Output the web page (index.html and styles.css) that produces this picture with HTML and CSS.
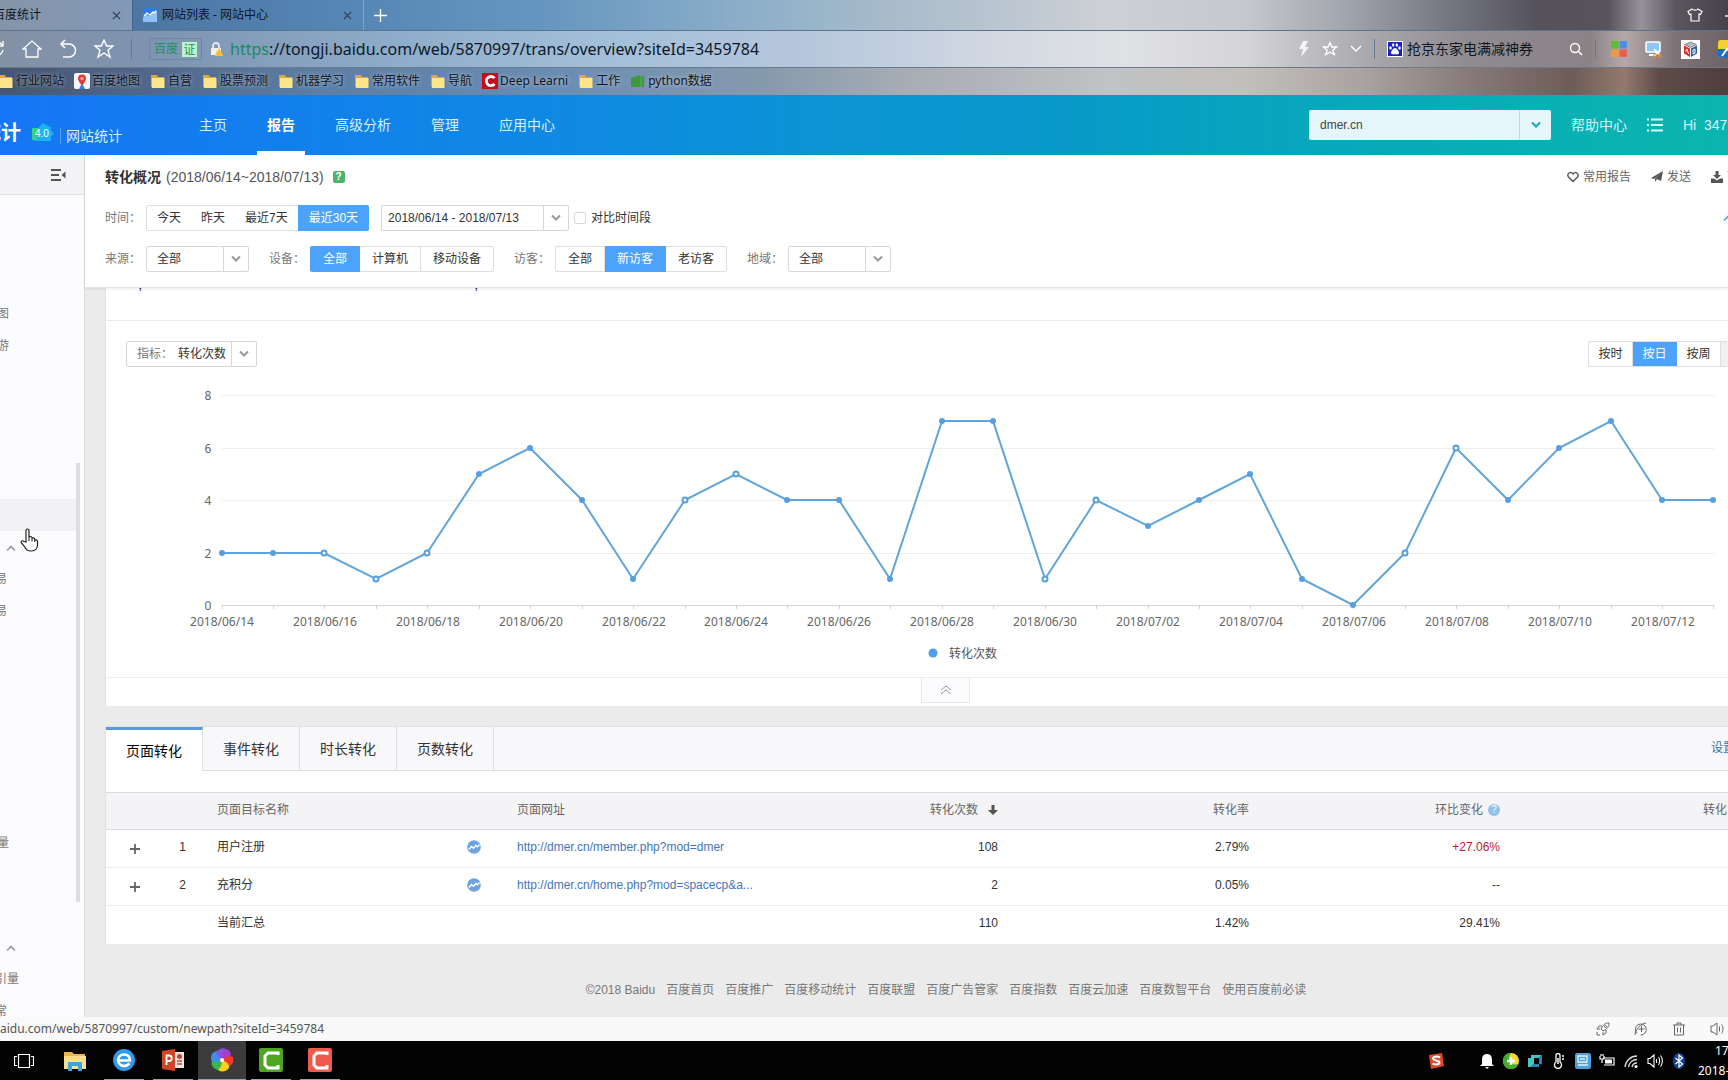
FILE: index.html
```html
<!DOCTYPE html>
<html lang="zh-CN">
<head>
<meta charset="utf-8">
<title>转化概况 - 百度统计</title>
<link rel="stylesheet" href="styles.css">
</head>
<body>
<svg class="defs" aria-hidden="true">
  <defs>
    <symbol id="folder" viewBox="0 0 16 16"><path d="M1 2h6l1 2h6v10H1z" fill="#d9a93a"/><path d="M2 5h12.500v10H2z" fill="#ffe58a"/></symbol>
    <symbol id="caret" viewBox="0 0 10 8"><path d="M1 1.500l4 4 4-4" fill="none" stroke="currentColor" stroke-width="2"/></symbol>
    <symbol id="close" viewBox="0 0 10 10"><path d="M1 1l8 8M9 1L1 9" fill="none" stroke="currentColor" stroke-width="1.200"/></symbol>
    <symbol id="trend" viewBox="0 0 14 14"><circle cx="7" cy="7" r="6.800" fill="#6fa3dd"/><path d="M2 9.500l2.500-3 2 1.800L9 5.500l1.500 1.300L12.500 4.500" fill="none" stroke="#fff" stroke-width="1.300"/></symbol>
  </defs>
</svg>
<div class="page">
  <div class="browser">
    <div class="tabstrip">
      <div class="btab btab-on"><span class="btab-name">百度统计</span><svg class="x" width="9" height="9"><use href="#close"/></svg></div>
      <div class="btab btab-off"><svg width="14" height="14" viewBox="0 0 14 14"><rect width="14" height="14" rx="1" fill="#2f7be0"/><path d="M0 9l3-3 3 2 4-4 1 1 3-3v12H0z" fill="#8fc0f7"/><path d="M1 8l3-3 3 2 3-3 1 1 2-2" fill="none" stroke="#fff" stroke-width="1.300"/></svg><span>网站列表 - 网站中心</span><svg class="x" width="9" height="9"><use href="#close"/></svg></div>
      <button class="plain newtab" aria-label="新标签页"><svg width="13" height="13" viewBox="0 0 13 13"><path d="M6.500 0v13M0 6.500h13" stroke="#fff" stroke-width="1.400"/></svg></button>
      <svg class="skin" width="16" height="14" viewBox="0 0 16 14"><path d="M5 1L1 3.500l1.500 3L4 6v7h8V6l1.500.5 1.500-3L11 1c-1 1.500-5 1.500-6 0z" fill="none" stroke="#fff" stroke-width="1.200"/></svg>
      <svg width="12" height="14" viewBox="0 0 12 14"><path d="M0 8h12" stroke="#fff" stroke-width="1.400"/></svg>
    </div>
    <div class="toolbar">
      <div class="tools">
        <button class="plain" aria-label="刷新"><svg width="18" height="18" viewBox="0 0 18 18"><path d="M15 5A7 7 0 1 0 16 10M16 1v5h-5" fill="none" stroke="#fff" stroke-width="1.400"/></svg></button>
        <button class="plain" aria-label="主页"><svg width="20" height="20" viewBox="0 0 20 20"><path d="M1 10l9-8 9 8h-3v8H4v-8z" fill="none" stroke="#fff" stroke-width="1.300"/></svg></button>
        <button class="plain" aria-label="恢复"><svg width="18" height="20" viewBox="0 0 18 20"><path d="M6 1L2 5l4 4M2 5h8a6 6 0 0 1 0 13H4" fill="none" stroke="#fff" stroke-width="1.500"/></svg></button>
        <button class="plain" aria-label="收藏"><svg width="20" height="20" viewBox="0 0 20 20"><path d="M10 1l2.600 6H19l-5 4.300 2 6.700-6-4-6 4 2-6.700L1 7h6.400z" fill="none" stroke="#fff" stroke-width="1.400"/></svg></button>
      </div>
      <span class="vline"></span>
      <span class="cert">百度<b>证</b></span>
      <svg class="lock" width="14" height="14" viewBox="0 0 14 14"><path d="M3 7V4a3 3 0 0 1 6 0v3" fill="none" stroke="#e8e8e8" stroke-width="1.800"/><rect x="1" y="6" width="10" height="7" fill="#f3f0ec"/><path d="M9 6l4.500 8h-9z" fill="#f2c230"/></svg>
      <span class="scheme">https</span><input class="url" aria-label="地址" value="://tongji.baidu.com/web/5870997/trans/overview?siteId=3459784">
      <div class="addr-right">
        <svg width="12" height="16" viewBox="0 0 12 16"><path d="M5 0h5L7 6h4L3 16l2-8H1z" fill="#f4f4f6"/></svg>
        <svg width="16" height="16" viewBox="0 0 20 20"><path d="M10 2l2.500 5.500H18l-4.500 4L15.500 17 10 14l-5.500 3 2-5.500L2 7.500h5.500z" fill="none" stroke="#fff" stroke-width="1.600"/></svg>
        <svg width="12" height="8" viewBox="0 0 12 8"><path d="M1 1l5 5 5-5" fill="none" stroke="#fff" stroke-width="1.400"/></svg>
        <span class="vline"></span>
        <svg width="16" height="16" viewBox="0 0 16 16"><rect width="16" height="16" fill="#fff"/><rect x="1" y="1" width="14" height="14" fill="#1a1fc8"/><g fill="#fff"><ellipse cx="3.500" cy="7" rx="1.300" ry="1.700"/><ellipse cx="6.200" cy="4" rx="1.200" ry="1.700"/><ellipse cx="9.800" cy="4" rx="1.200" ry="1.700"/><ellipse cx="12.500" cy="7" rx="1.300" ry="1.700"/><path d="M8 7c2 0 4 3.500 4 5s-2 1.500-4 1.300S4 13.500 4 12s2-5 4-5z"/></g></svg>
        <input class="find" aria-label="搜索" value="抢京东家电满减神券">
        <svg width="14" height="14" viewBox="0 0 14 14"><circle cx="6" cy="6" r="4.500" fill="none" stroke="#fff" stroke-width="1.400"/><path d="M9.500 9.500L13 13" stroke="#fff" stroke-width="1.600"/></svg>
        <span class="vline"></span>
        <svg class="app" width="16" height="16" viewBox="0 0 16 16"><rect width="7.500" height="7.500" rx="1" fill="#5bbf2f"/><rect x="8.500" width="7.500" height="7.500" rx="1" fill="#4f8fe8"/><rect y="8.500" width="7.500" height="7.500" rx="1" fill="#f39a3e"/><rect x="8.500" y="8.500" width="7.500" height="7.500" rx="1" fill="#e8604c"/></svg>
        <svg class="app" width="18" height="18" viewBox="0 0 18 18"><rect x="1" y="2" width="14" height="10" rx="1" fill="#8cc6f5" stroke="#fff" stroke-width="1.500"/><path d="M4 15h7" stroke="#fff" stroke-width="2"/><path d="M9 9l6 6M15 10l-5 5" stroke="#fff" stroke-width="1.500"/><circle cx="10" cy="16" r="1.500" fill="none" stroke="#e88a2a"/><circle cx="15" cy="16" r="1.500" fill="none" stroke="#e88a2a"/></svg>
        <svg class="app" width="19" height="19" viewBox="0 0 19 19"><rect width="19" height="19" fill="#fff"/><path d="M9.500 2l6 2.500-6 3-6-3z" fill="#b9bcc4" stroke="#555" stroke-width=".6"/><path d="M3 5.500l6 3V17l-6-3.500z" fill="#d9302c"/><path d="M16 5.500l-6 3V17l6-3.500z" fill="#2b5cb0"/><path d="M4.500 12L6 9l1.500 5M12 10l2-1v4l-2 1z" fill="none" stroke="#fff"/></svg>
        <svg class="app" width="18" height="18" viewBox="0 0 18 18"><rect width="18" height="18" rx="3" fill="#f7cf2f"/><path d="M0 9h18v6a3 3 0 0 1-3 3H3a3 3 0 0 1-3-3z" fill="#1d6fc4"/><path d="M4 16l5-7 4 3" stroke="#fff" stroke-width="2" fill="none"/></svg>
      </div>
    </div>
    <nav class="bookmarks">
      <a href="#"><svg width="16" height="16"><use href="#folder"/></svg>行业网站</a>
      <a href="#"><svg width="16" height="16" viewBox="0 0 16 16"><rect width="16" height="16" rx="2" fill="#f5f7fa"/><path d="M5 16l3-6 3 6z" fill="#3b7ce0"/><path d="M8 1.500a4 4 0 0 1 4 4c0 3-4 7-4 7s-4-4-4-7a4 4 0 0 1 4-4z" fill="#e23b35"/><circle cx="8" cy="5.500" r="1.700" fill="#f5a09c"/></svg>百度地图</a>
      <a href="#"><svg width="16" height="16"><use href="#folder"/></svg>自营</a>
      <a href="#"><svg width="16" height="16"><use href="#folder"/></svg>股票预测</a>
      <a href="#"><svg width="16" height="16"><use href="#folder"/></svg>机器学习</a>
      <a href="#"><svg width="16" height="16"><use href="#folder"/></svg>常用软件</a>
      <a href="#"><svg width="16" height="16"><use href="#folder"/></svg>导航</a>
      <a href="#"><svg width="16" height="16" viewBox="0 0 16 16"><rect width="16" height="16" fill="#c40d1e"/><path d="M12.500 5.200A4.600 4.600 0 1 0 12.500 11" fill="none" stroke="#fff" stroke-width="2.800"/></svg>Deep Learni</a>
      <a href="#"><svg width="16" height="16"><use href="#folder"/></svg>工作</a>
      <a href="#"><svg width="16" height="16" viewBox="0 0 16 16"><path d="M1 5l9-3 1 1h3v11H1z" fill="#3c9a3c"/><path d="M11 3v11" stroke="#58b058"/></svg>python数据</a>
    </nav>
  </div>

  <header class="header">
    <div class="brand"><span class="logo">百度统计</span><svg class="ver" width="22" height="20" viewBox="0 0 22 20"><path d="M0 5h6l5-5 9 5-2 1 4 5-3 2v5H3l-3-2z" fill="#19b3f0"/><path d="M0 5h7l-3 12H0z" fill="#35cf8a"/><text x="3" y="14">4.0</text></svg><span class="brand-sub">网站统计</span></div>
    <nav class="nav"><a href="#">主页</a><a href="#" class="on">报告</a><a href="#">高级分析</a><a href="#">管理</a><a href="#">应用中心</a></nav>
    <div class="header-right">
      <div class="site"><select aria-label="站点"><option>dmer.cn</option></select><span class="site-caret"><svg width="10" height="8"><use href="#caret"/></svg></span></div>
      <a href="#">帮助中心</a>
      <svg width="16" height="14" viewBox="0 0 16 14"><path d="M0 1.500h2M4 1.500h12M0 7h2M4 7h12M0 12.500h2M4 12.500h12" stroke="#d8fbfa" stroke-width="2"/></svg>
      <span class="user">Hi&nbsp; 347</span>
    </div>
  </header>

  <div class="body">
    <aside class="side">
      <div class="side-top"><button class="plain" aria-label="收起"><svg width="15" height="14" viewBox="0 0 15 14"><path d="M0 2h10M0 7h8M0 12h10" stroke="#555" stroke-width="1.800"/><path d="M14.500 3.500v7L10.500 7z" fill="#555"/></svg></button></div>
      <ul class="menu menu-a"><li>图</li><li>游</li></ul>
      <div class="menu-hover"></div>
      <svg class="fold" width="10" height="8" viewBox="0 0 10 8"><path d="M1 6.500l4-4 4 4" fill="none" stroke="#999" stroke-width="1.600"/></svg>
      <ul class="menu menu-b"><li>易</li><li>易</li></ul>
      <ul class="menu menu-c"><li>量</li></ul>
      <svg class="fold" width="10" height="8" viewBox="0 0 10 8"><path d="M1 6.500l4-4 4 4" fill="none" stroke="#999" stroke-width="1.600"/></svg>
      <ul class="menu menu-d"><li class="wide">引量</li><li>常</li></ul>
      <span class="side-scroll"></span>
      <svg class="hand" width="19" height="24" viewBox="0 0 19 24"><path d="M6 14V2.500C6 .5 9 .5 9 2.500V10c0-2 3-2 3 0v1c0-1.500 2.800-1.500 2.800.5v1c.5-1 2.700-1 2.700.8V17c0 3-2 6-6 6-4.500 0-5.500-1.500-7-4.500L1.500 15c-1-2 1-3 2.500-1.500z" fill="#fff" stroke="#222" stroke-width="1.200"/><path d="M9 10v3M12 11v2.500M14.800 12v2" stroke="#222"/></svg>
    </aside>

    <main class="main">
      <section class="filters">
        <div class="title-row">
          <h1>转化概况</h1><span class="range">(2018/06/14~2018/07/13)</span><span class="help">?</span>
          <div class="actions">
            <a href="#"><svg width="12" height="12" viewBox="0 0 12 12"><path d="M6 10.500L1.500 6C-.5 3 3.500-.5 6 3c2.500-3.500 6.500 0 4.500 3z" fill="none" stroke="#555" stroke-width="1.400"/></svg>常用报告</a>
            <a href="#"><svg width="12" height="12" viewBox="0 0 12 12"><path d="M0 7L12 0l-2 10-4-2-2 3V7.500L10 2 3 8z" fill="#555"/></svg>发送</a>
            <a href="#"><svg width="12" height="12" viewBox="0 0 12 12"><path d="M4.500 0h3v4H10L6 8 2 4h2.500z" fill="#555"/><path d="M0 7.500h3l3 2 3-2h3V12H0z" fill="#555"/></svg>下载</a>
          </div>
        </div>
        <div class="frow">
          <span class="flabel">时间：</span>
          <div class="seg seg-loose"><button>今天</button><button>昨天</button><button>最近7天</button><button class="on">最近30天</button></div>
          <div class="box date"><input aria-label="日期范围" value="2018/06/14 - 2018/07/13"><span class="drop"><svg width="10" height="8"><use href="#caret"/></svg></span></div>
          <label class="check"><input type="checkbox">对比时间段</label>
          <button class="plain up" aria-label="收起筛选"><svg width="10" height="8" viewBox="0 0 10 8"><path d="M1 6.500l4-4 4 4" fill="none" stroke="#4ba3fb" stroke-width="1.600"/></svg></button>
        </div>
        <div class="frow">
          <label class="flabel" for="src">来源：</label>
          <div class="box pick"><select id="src"><option>全部</option></select><span class="drop"><svg width="10" height="8"><use href="#caret"/></svg></span></div>
          <span class="flabel gap">设备：</span>
          <div class="seg"><button class="on">全部</button><button>计算机</button><button>移动设备</button></div>
          <span class="flabel gap">访客：</span>
          <div class="seg"><button>全部</button><button class="on">新访客</button><button>老访客</button></div>
          <label class="flabel gap" for="area">地域：</label>
          <div class="box pick"><select id="area"><option>全部</option></select><span class="drop"><svg width="10" height="8"><use href="#caret"/></svg></span></div>
        </div>
      </section>

      <section class="card">
        <div class="totals"><span>,</span><span>,</span></div>
        <div class="chart-tools">
          <div class="box metric"><label for="metric">指标：</label><select id="metric"><option>转化次数</option></select><span class="drop"><svg width="10" height="8"><use href="#caret"/></svg></span></div>
          <div class="seg unit"><button>按时</button><button class="on">按日</button><button>按周</button><button class="off" disabled aria-label="按月"></button></div>
        </div>
        <svg class="chart" viewBox="0 0 1622 310">
          <path class="grid" d="M116 28.500h1492M116 81.500h1492M116 133.500h1492M116 186.500h1492"/>
          <path class="axis" d="M116 238.500h1492M116.500 239v3M167.500 239v3M218.500 239v3M270.500 239v3M321.500 239v3M373.500 239v3M424.500 239v3M476.500 239v3M527.500 239v3M579.500 239v3M630.500 239v3M681.500 239v3M733.500 239v3M784.500 239v3M836.500 239v3M887.500 239v3M939.500 239v3M990.500 239v3M1042.500 239v3M1093.500 239v3M1144.500 239v3M1196.500 239v3M1247.500 239v3M1299.500 239v3M1350.500 239v3M1402.500 239v3M1453.500 239v3M1505.500 239v3M1556.500 239v3M1607.500 239v3"/>
          <polyline class="line" points="116,186 167,186 218,186 270,212 321,186 373,107 424,81 476,133 527,212 579,133 630,107 681,133 733,133 784,212 836,54 887,54 939,212 990,133 1042,159 1093,133 1144,107 1196,212 1247,238 1299,186 1350,81 1402,133 1453,81 1505,54 1556,133 1607,133"/>
          <path class="dots" d="M116 186h0M167 186h0M373 107h0M424 81h0M476 133h0M527 212h0M681 133h0M733 133h0M784 212h0M836 54h0M887 54h0M1042 159h0M1093 133h0M1144 107h0M1196 212h0M1247 238h0M1402 133h0M1453 81h0M1505 54h0M1556 133h0M1607 133h0"/>
          <path class="dots rings" d="M218 186h0M270 212h0M321 186h0M579 133h0M630 107h0M939 212h0M990 133h0M1299 186h0M1350 81h0"/>
          <path class="holes" d="M218 186h0M270 212h0M321 186h0M579 133h0M630 107h0M939 212h0M990 133h0M1299 186h0M1350 81h0"/>
          <g class="ticks"><text x="102" y="33">8</text><text x="102" y="86">6</text><text x="102" y="138">4</text><text x="102" y="191">2</text><text x="102" y="243">0</text></g>
          <g class="ticks"><text x="116" y="259">2018/06/14</text><text x="219" y="259">2018/06/16</text><text x="322" y="259">2018/06/18</text><text x="425" y="259">2018/06/20</text><text x="528" y="259">2018/06/22</text><text x="630" y="259">2018/06/24</text><text x="733" y="259">2018/06/26</text><text x="836" y="259">2018/06/28</text><text x="939" y="259">2018/06/30</text><text x="1042" y="259">2018/07/02</text><text x="1145" y="259">2018/07/04</text><text x="1248" y="259">2018/07/06</text><text x="1351" y="259">2018/07/08</text><text x="1454" y="259">2018/07/10</text><text x="1557" y="259">2018/07/12</text></g>
          <circle cx="827" cy="286" r="4.500" fill="#4f9fe8"/><text class="legend" x="843" y="291">转化次数</text>
        </svg>
        <div class="collapse"><button aria-label="收起图表"><svg width="12" height="10" viewBox="0 0 12 10"><path d="M1 5l5-4 5 4M1 9l5-4 5 4" fill="none" stroke="#999"/></svg></button></div>
      </section>

      <section class="card data">
        <div class="tabs"><button class="on">页面转化</button><button>事件转化</button><button>时长转化</button><button>页数转化</button><a href="#">设置</a></div>
        <table>
          <colgroup><col class="c-plus"><col class="c-idx"><col class="c-name"><col class="c-icon"><col class="c-url"><col class="c-count"><col class="c-num"><col class="c-num"><col></colgroup>
          <thead><tr><th></th><th></th><th>页面目标名称</th><th></th><th>页面网址</th><th class="num">转化次数<svg class="sort" width="10" height="10" viewBox="0 0 10 10"><path d="M3.500 0h3v5H10l-5 5-5-5h3.500z" fill="#555"/></svg></th><th class="num">转化率</th><th class="num">环比变化<span class="q">?</span></th><th class="last">转化</th></tr></thead>
          <tbody>
            <tr><td class="plus"><button class="plain" aria-label="展开"><svg width="10" height="10" viewBox="0 0 10 10"><path d="M5 0v10M0 5h10" stroke="#666" stroke-width="1.800"/></svg></button></td><td class="idx">1</td><td>用户注册</td><td><svg width="14" height="14"><use href="#trend"/></svg></td><td><a href="#">http://dmer.cn/member.php?mod=dmer</a></td><td class="num">108</td><td class="num">2.79%</td><td class="num rise">+27.06%</td><td></td></tr>
            <tr><td class="plus"><button class="plain" aria-label="展开"><svg width="10" height="10" viewBox="0 0 10 10"><path d="M5 0v10M0 5h10" stroke="#666" stroke-width="1.800"/></svg></button></td><td class="idx">2</td><td>充积分</td><td><svg width="14" height="14"><use href="#trend"/></svg></td><td><a href="#">http://dmer.cn/home.php?mod=spacecp&amp;a...</a></td><td class="num">2</td><td class="num">0.05%</td><td class="num">--</td><td></td></tr>
            <tr><td></td><td></td><td>当前汇总</td><td></td><td></td><td class="num">110</td><td class="num">1.42%</td><td class="num">29.41%</td><td></td></tr>
          </tbody>
        </table>
      </section>
      <footer class="footer"><span>©2018 Baidu</span><a href="#">百度首页</a><a href="#">百度推广</a><a href="#">百度移动统计</a><a href="#">百度联盟</a><a href="#">百度广告管家</a><a href="#">百度指数</a><a href="#">百度云加速</a><a href="#">百度数智平台</a><a href="#">使用百度前必读</a></footer>
    </main>
  </div>

  <div class="status">
    <span>aidu.com/web/5870997/custom/newpath?siteId=3459784</span>
    <div class="status-icons">
      <svg width="14" height="14" viewBox="0 0 14 14"><path d="M13 1c-4 0-6 2-8 6l2 2c4-2 6-4 6-8zM6 4L3 4 1 7h3M10 8v3l-3 2v-3M1 10v3h3" fill="none" stroke="#666"/><circle cx="9.500" cy="4.500" r="1" fill="none" stroke="#666"/></svg>
      <svg width="14" height="14" viewBox="0 0 14 14"><path d="M3 11.500a5.500 5.500 0 1 1 3.500 1.500M1 13C2 7 6 2 12 1M7.500 4v6M4.500 7h6" fill="none" stroke="#666"/></svg>
      <svg width="14" height="14" viewBox="0 0 14 14"><path d="M1 3h12M5 3V1h4v2M2.500 3v10h9V3M5.500 5.500v5M8.500 5.500v5" fill="none" stroke="#666"/></svg>
      <svg width="14" height="14" viewBox="0 0 14 14"><path d="M1 4v6h2l4 3V1L3 4zM9.500 4.500v5M11.500 2.500c2 2 2 7 0 9" fill="none" stroke="#666"/></svg>
    </div>
  </div>

  <div class="taskbar">
    <div class="task-apps">
      <div class="view"><svg width="20" height="14" viewBox="0 0 20 14"><path d="M4.500.5h11v13h-11zM3 2.500H.5v9H3M17 2.500h2.500v9H17" fill="none" stroke="#fff" stroke-width="1.200"/></svg></div>
      <div><svg width="22" height="20" viewBox="0 0 22 20"><path d="M0 1h8l2 2h11v15H0z" fill="#e8b84a"/><path d="M0 5h22v13H0z" fill="#fbdf8d"/><path d="M4 20v-9h14v9h-4v-5H8v5z" fill="#3fa5dd"/></svg></div>
      <div class="run"><svg width="22" height="22" viewBox="0 0 22 22"><circle cx="11" cy="11" r="11" fill="#2f9bea"/><path d="M5 11.500h12c0-4-2.500-6-6-6s-6 2.500-6 5.500 2.500 6 6 6c2.500 0 4-1 5.500-2.500" fill="none" stroke="#fff" stroke-width="2.600"/></svg></div>
      <div class="run"><svg width="22" height="22" viewBox="0 0 22 22"><path d="M12 3h10v16H12z" fill="#f3e6e2"/><path d="M15 12h5M15 15h5" stroke="#c8432a" stroke-width="1.500"/><circle cx="17.500" cy="7.500" r="2.500" fill="#c8432a"/><path d="M0 2l13-2v22L0 20z" fill="#d04526"/><path d="M4.500 16V6.500h2.500a2.500 2.500 0 0 1 0 5.500H4.500" fill="none" stroke="#fff" stroke-width="1.800"/></svg></div>
      <div class="run now"><svg width="24" height="24" viewBox="-12 -12 24 24"><path d="M0 0Q-2-8 4-11 11-9 8-2 4-3 0 0z" fill="#a43ed0"/><path d="M0 0Q6-6 11-3 13 5 5 7 4 3 0 0z" fill="#ee3b2b"/><path d="M0 0Q8 3 7 8 2 14-4 10-4 4 0 0z" fill="#f7d21e"/><path d="M0 0Q0 8-5 10-12 7-10 1-5-2 0 0z" fill="#3cb54a"/><path d="M0 0Q-8 4-11 0-12-8-5-9-2-6 0 0z" fill="#3e8fe8"/><path d="M0 0Q-7-5-5-9-1-13 4-11-1-6 0 0z" fill="#8a50e0"/><circle r="2" fill="#fff"/></svg></div>
      <div class="run"><svg width="24" height="24" viewBox="0 0 24 24"><rect width="24" height="24" rx="2" fill="#4ea51f"/><path d="M19 7V5H9L6 8v9l3 3h10v-3" fill="none" stroke="#fff" stroke-width="3"/></svg></div>
      <div class="run"><svg width="24" height="24" viewBox="0 0 24 24"><rect width="24" height="24" rx="2" fill="#ee5a4c"/><path d="M19 7V5H9L6 8v9l3 3h10v-3" fill="none" stroke="#fff" stroke-width="3"/></svg></div>
    </div>
    <div class="tray">
      <svg class="ime" width="16" height="16" viewBox="0 0 16 16"><path d="M1 2l13-2 2 13-13 3z" fill="#e2492b"/><path d="M12 4.500c-3-1.500-7-1-7 1s6.500 2 6.500 4-4.500 2.500-7 1" fill="none" stroke="#fff" stroke-width="2"/></svg>
      <svg width="16" height="16" viewBox="0 0 16 16"><path d="M8 1c4 0 5 3 5 6v4l2 2H1l2-2V7c0-3 1-6 5-6zM6 14h4l-2 2z" fill="#fff"/></svg>
      <svg width="16" height="16" viewBox="0 0 16 16"><circle cx="8" cy="8" r="8" fill="#f3dd20"/><path d="M8 0a8 8 0 0 0 0 16c4 0 6-2 7-5C8 13 3 7 8 0z" fill="#3fae2e"/><path d="M8 4v8M4 8h8" stroke="#fff" stroke-width="2.500"/></svg>
      <svg width="16" height="16" viewBox="0 0 16 16"><path d="M1 5h3V2h11l-3 3H7v6l-3 3H1z" fill="#45c4c0"/><path d="M15 2v9h-3v3H4l3-3h5V5z" fill="#2a86b0"/></svg>
      <svg width="16" height="16" viewBox="0 0 16 16"><path d="M5 9V2.500a2 2 0 0 1 4 0V9a3.500 3.500 0 1 1-4 0z" fill="none" stroke="#fff" stroke-width="1.300"/><path d="M7 5v6M11 3h2M11 6h2" stroke="#fff" stroke-width="1.500"/></svg>
      <svg width="16" height="16" viewBox="0 0 16 16"><rect width="16" height="16" rx="2" fill="#4f9fd8"/><path d="M3 9V3h9v6H3zM5 6h5M3 12h10" fill="none" stroke="#e2f3ff" stroke-width="1.300"/></svg>
      <svg width="16" height="16" viewBox="0 0 16 16"><path d="M4 5h11v7H5M1 3v3h4V3M2 1v2M4 1v2M3 6v4" fill="none" stroke="#fff" stroke-width="1.200"/><path d="M6 6.500h7v4H6z" fill="#fff"/></svg>
      <svg width="16" height="16" viewBox="0 0 16 16"><path d="M2 14A12 12 0 0 1 14 3M5.500 14A8.500 8.500 0 0 1 14 6.500M9 14a5 5 0 0 1 5-4" fill="none" stroke="#ddd" stroke-width="1.300"/><circle cx="13" cy="13.500" r="1.500" fill="#fff"/></svg>
      <svg width="16" height="16" viewBox="0 0 16 16"><path d="M1 5.500v5h2l4 3.500V2L3 5.500zM9.500 6v4M11.500 4c1.500 2 1.500 6 0 8M13.500 2.500c2.500 3 2.500 8 0 11" fill="none" stroke="#fff" stroke-width="1.100"/></svg>
      <svg width="16" height="16" viewBox="0 0 16 16"><ellipse cx="8" cy="8" rx="6" ry="8" fill="#12418f"/><path d="M4.500 5l7 6L8 14V2l3.500 3-7 6" fill="none" stroke="#fff" stroke-width="1.200"/></svg>
      <div class="clock"><span class="hour">17</span><span>2018-</span></div>
    </div>
  </div>
</div>
</body>
</html>
```
FILE: styles.css
```css
* { box-sizing: border-box; }
body { margin: 0; font: 12px/18px "Liberation Sans", "Noto Sans CJK SC", sans-serif; color: #333; background: #ebebeb; }
a { color: inherit; text-decoration: none; }
button, input, select { font: inherit; color: inherit; margin: 0; padding: 0; border: 0; background: none; outline: 0; border-radius: 0; }
select { appearance: none; }
ul { list-style: none; margin: 0; padding: 0; }
svg { display: block; flex: none; }
.defs { position: absolute; width: 0; height: 0; }
.plain { display: block; line-height: 0; }
.page { display: flex; flex-direction: column; min-height: 100vh; overflow: hidden; }

/* browser frame */
.browser { font-family: "Noto Sans", "Noto Sans CJK SC", sans-serif; color: #10161e; white-space: nowrap; }
.tabstrip { display: flex; align-items: center; height: 30px; background: linear-gradient(90deg, #4c76a4 8%, #5586b4 20%, #6797c0 32%, #8fb0c9 44%, #a9bccb 52%, #cdd0d6 64%, #c5c8cc 72%, #a0a4ac 78%, #73757f 84%, #55525c 89%, #58535b 93%, #96929a 95%, #5a565e 97%, #48424a); }
.btab { display: flex; align-items: center; height: 30px; border-right: 1px solid #43648a; }
.btab-on { width: 133px; justify-content: flex-end; padding-right: 11px; background: linear-gradient(90deg, #8595a8, #8299b8); }
.btab-name { margin-right: auto; margin-left: -7px; }
.btab-off { width: 231px; padding: 0 11px 0 10px; gap: 5px; border-color: #7fa4c8; }
.x { margin-left: auto; color: #2c3848; }
.newtab { margin-left: 10px; }
.skin { margin-left: auto; margin-right: 22px; }
.tabstrip > svg:last-child { margin-right: -9px; }
.toolbar { display: flex; align-items: center; height: 38px; border-top: 1px solid #5d748e; border-bottom: 1px solid #6b7a8c; background: linear-gradient(90deg, #8391a5, #7d94b0 9%, #8eaccb 23%, #a3bfd8 35%, #b4c6dc 46%, #d3d9e2 58%, #e0e1e5 65%, #d5d5d7 72%, #aaa9ae 79%, #8f8c91 85%, #8a8286 92%, #b5a8aa 94%, #7d7276 97%, #6e6468); }
.tools { display: flex; align-items: center; gap: 17px; margin-left: -13px; }
.vline { flex: none; width: 1px; height: 20px; background: #6a7888; }
.tools + .vline { margin-left: 17px; }
.cert { display: flex; align-items: center; gap: 4px; height: 22px; margin-left: 17px; padding: 0 4px; border: 1px solid #6b8a9c; color: #1f8f62; }
.cert b { width: 15px; line-height: 15px; background: #bff3cc; font-weight: 400; text-align: center; }
.lock { margin: 0 6px 0 8px; }
.scheme, .url { font-size: 16px; line-height: 20px; }
.scheme { color: #1d8a5e; }
.url { flex: 1; min-width: 0; color: #0d1826; }
.addr-right { display: flex; align-items: center; width: 430px; gap: 12px; overflow: hidden; }
.find { flex: none; width: 150px; font-size: 14px; margin-left: -8px; }
.app { margin: 0 3px; }
.bookmarks { display: flex; align-items: center; gap: 10px; height: 27px; padding-bottom: 2px; background: linear-gradient(90deg, #465670, #50658a 8%, #5d7da3 18%, #6c8eb3 33%, #8599ac 44%, #a9aeb4 53%, #c0c2c4 64%, #c3c0bb 72%, #a9a2a0 79%, #877a78 85%, #6e5c58 91%, #94796f 94%, #5e4c48 96%, #4e3e3c); }
.bookmarks a { display: flex; align-items: center; gap: 2px; text-shadow: 0 0 4px rgba(255, 255, 255, .6); }
.bookmarks a:first-child { margin-left: -2px; }

/* product header */
.header { display: flex; height: 60px; color: #d6f1ff; font-size: 14px; white-space: nowrap; background: linear-gradient(90deg, #1576f5, #0f89e3 32%, #0b96d3 50%, #0899c9 62%, #07a4bf 72%, #08aeb5 86%, #0bb5ae); }
.brand { display: flex; align-items: center; width: 189px; padding-top: 16px; }
.logo { width: 21px; display: flex; justify-content: flex-end; font-size: 20px; font-weight: 700; color: #fff; }
.ver { margin: 0 6px 0 11px; }
.ver text { font: 10px "Liberation Sans", sans-serif; fill: #fff; }
.brand-sub { margin-top: 6px; border-left: 1px solid #4fa0ff; padding-left: 5px; line-height: 16px; }
.nav { display: flex; gap: 20px; }
.nav a { padding: 0 10px; line-height: 60px; }
.nav .on { font-weight: 700; color: #fff; border-bottom: 4px solid #fff; }
.header-right { display: flex; align-items: center; gap: 20px; width: 419px; margin-left: auto; overflow: hidden; }
.site { display: flex; width: 242px; height: 30px; background: #e4f6fa; border-radius: 2px; color: #444; font-size: 12px; }
.site select { flex: 1; padding: 0 11px; }
.site-caret { display: flex; align-items: center; justify-content: center; width: 32px; border-left: 1px solid #b5dfe6; color: #17a9b8; }

/* side menu */
.body { display: flex; flex: 1; }
.side { position: relative; flex: none; width: 85px; background: #fcfcff; border-right: 1px solid #dcdcde; color: #777; overflow: hidden; }
.side-top { display: flex; align-items: center; justify-content: flex-end; height: 40px; padding-right: 18px; background: #f3f3f6; border-bottom: 1px solid #e2e2e6; }
.menu li { display: flex; justify-content: flex-end; width: 9px; line-height: 32px; white-space: nowrap; }
.menu .wide { width: 19px; }
.menu-a { padding-top: 103px; }
.menu-hover { width: 76px; height: 32px; margin-top: 137px; background: #f2f2f4; }
.fold { margin: 13px 0 11px 6px; }
.menu-b li { width: 7px; }
.menu-c { padding-top: 200px; }
.menu-c + .fold { margin-top: 85px; }
.menu-d { height: 52px; }
.menu-d li { width: 7px; }
.side-scroll { position: absolute; left: 76px; top: 308px; width: 4px; height: 439px; background: #dddddf; }
.hand { position: absolute; left: 20px; top: 373px; }

/* filters */
.main { flex: 1; min-width: 0; }
.filters { position: relative; z-index: 1; padding: 12px 0 15px 20px; background: #fff; border-bottom: 1px solid #e4e4e6; box-shadow: 0 1px 3px rgba(0, 0, 0, .08); white-space: nowrap; }
.title-row { display: flex; align-items: center; height: 20px; margin-bottom: 18px; font-size: 14px; }
h1 { margin: 0 5px 0 0; font-size: 14px; color: #333; }
.range { color: #555; }
.help { width: 12px; margin-left: 9px; border-radius: 2px; background: #4fb36c; color: #fff; font: 700 10px/12px "Liberation Sans", sans-serif; text-align: center; }
.actions { display: flex; gap: 20px; width: 161px; margin-left: auto; overflow: hidden; font-size: 12px; color: #666; }
.actions a { display: flex; align-items: center; gap: 4px; }
.frow { display: flex; align-items: center; height: 26px; }
.frow + .frow { margin-top: 15px; }
.flabel { width: 41px; color: #777; }
.gap { margin-left: 20px; }
.seg { display: flex; height: 26px; border: 1px solid #dedee2; border-radius: 2px; }
.seg button { padding: 0 12px; border-right: 1px solid #dedee2; }
.seg button:last-child { border-right: 0; }
.seg .on { margin: -1px 0; border-color: #4ba3fb; background: #4ba3fb; color: #fff; }
.seg .on:first-child { margin-left: -1px; padding: 0 12px 0 13px; border-radius: 2px 0 0 2px; }
.seg-loose button { padding: 0 10px; border: 0; }
.seg-loose .on:last-child { margin-right: -1px; padding: 0 11px; border-radius: 0 2px 2px 0; }
.box { display: flex; height: 26px; border: 1px solid #d8d8dc; border-radius: 2px; background: #fff; }
.drop { display: flex; flex: none; align-items: center; justify-content: center; width: 25px; border-left: 1px solid #d8d8dc; color: #999; }
.date { width: 188px; margin-left: 12px; }
.date input { flex: 1; min-width: 0; padding-left: 6px; }
.pick { width: 103px; }
.pick select { flex: 1; padding-left: 10px; }
.check { display: flex; align-items: center; gap: 5px; margin-left: 5px; }
.check input { appearance: none; width: 12px; height: 12px; border: 1px solid #d8d8dc; border-radius: 2px; background: #fff; }
.up { margin-left: auto; margin-right: -5px; }

/* chart */
.card { margin-left: 20px; background: #fff; border-left: 1px solid #e2e2e4; }
.totals { display: flex; height: 50px; margin-top: -17px; padding-left: 32px; border-bottom: 1px solid #ececee; font-size: 16px; line-height: 26px; }
.totals span { width: 336px; }
.chart-tools { display: flex; justify-content: space-between; padding: 20px 0 0 20px; }
.metric { width: 131px; }
.metric label { padding-left: 10px; line-height: 24px; color: #777; }
.metric select { flex: 1; padding-left: 5px; }
.unit { width: 140px; overflow: hidden; border-right: 0; }
.unit button { flex: none; width: 44px; padding: 0; }
.unit .on { margin: 0; }
.unit .off { background: #f0f0f2; }
.chart { width: 100%; height: auto; }
.grid { stroke: #eee; fill: none; }
.axis { stroke: #d6d6d8; fill: none; }
.line { fill: none; stroke: #5fa5dc; stroke-width: 2; }
.dots { stroke: #559fe0; stroke-width: 6; stroke-linecap: round; }
.rings { stroke-width: 7; }
.holes { stroke: #fff; stroke-width: 3; stroke-linecap: round; }
.ticks { font: 12px "Noto Sans", sans-serif; fill: #666; text-anchor: middle; }
.legend { fill: #555; }
.collapse { display: flex; justify-content: center; height: 29px; padding-left: 57px; border-top: 1px solid #ececee; }
.collapse button { display: flex; align-items: center; justify-content: center; width: 49px; height: 25px; border: 1px solid #e8e8ec; border-top: 0; background: #fcfcfe; }

/* data table */
.data { margin-top: 20px; overflow: hidden; }
.tabs { display: flex; height: 45px; margin-bottom: 21px; border-top: 1px solid #e0e0e4; border-bottom: 1px solid #dedee2; background: #f8f7fa; font-size: 14px; white-space: nowrap; }
.tabs button { width: 97px; border-right: 1px solid #dedee2; }
.tabs .on { height: 44px; border-top: 3px solid #5b9bdc; background: #fff; color: #000; }
.tabs a { width: 17px; margin-left: auto; color: #3273b4; font-size: 12px; line-height: 43px; }
table { width: 100%; table-layout: fixed; border-collapse: collapse; white-space: nowrap; }
.c-plus { width: 57px; }
.c-idx { width: 44px; }
.c-name { width: 250px; }
.c-icon { width: 50px; }
.c-url { width: 251px; }
.c-count { width: 250px; }
.c-num { width: 251px; }
th, td { height: 38px; padding: 0 10px 4px; border-bottom: 1px solid #eee; text-align: left; font-weight: 400; }
th { height: 37px; padding-bottom: 2px; border-top: 1px solid #dcdce0; border-bottom-color: #dcdce0; background: #f4f4f6; color: #666; }
tbody tr:last-child td { border-bottom: 0; }
.plus { padding: 0 0 0 24px; }
td.idx { padding-right: 21px; text-align: right; }
.num { text-align: right; }
td a { color: #4676b8; }
.rise { color: #b81c33; }
.sort { display: inline-block; margin-left: 10px; vertical-align: -1px; }
.q { display: inline-block; width: 12px; margin-left: 5px; border-radius: 50%; background: #8fc1ec; color: #fff; font-size: 10px; line-height: 12px; text-align: center; vertical-align: 1px; }
th.last { padding: 0 0 2px 193px; }
.footer { display: flex; justify-content: center; gap: 11px; padding: 37px 0 18px 79px; color: #777; white-space: nowrap; }

/* status bar and task bar */
.status { display: flex; align-items: center; justify-content: space-between; height: 24px; padding-right: 4px; background: #f9f9fa; color: #555; font: 12px/22px "Noto Sans", sans-serif; }
.status-icons { display: flex; gap: 24px; }
.taskbar { display: flex; justify-content: space-between; height: 40px; background: #040303; color: #fff; }
.task-apps { display: flex; gap: 9px; padding-left: 4px; }
.task-apps div { display: flex; align-items: center; justify-content: center; width: 40px; }
.task-apps .view { margin-right: 2px; }
.task-apps .run { border-bottom: 2px solid #94a6b4; }
.task-apps .now { width: 48px; margin: 0 -4px; background: #3b3b3d; }
.tray { display: flex; align-items: center; gap: 8px; width: 300px; overflow: hidden; }
.ime { margin-right: 27px; }
.clock { display: flex; flex-direction: column; flex: none; margin-left: 3px; font: 12px/20px "Noto Sans", sans-serif; }
.hour { padding-left: 17px; }
```
